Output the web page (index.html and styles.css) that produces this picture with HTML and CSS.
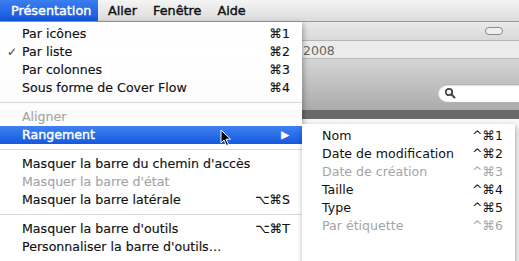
FILE: index.html
```html
<!DOCTYPE html>
<html>
	<head>
		<meta charset="utf-8">
		<title>Présentation</title>
		<link rel="stylesheet" href="styles.css">
	</head>
	<body>
		<div class="menubar">
			<span class="mb-item active">Présentation</span>
			<span class="mb-item">Aller</span>
			<span class="mb-item">Fenêtre</span>
			<span class="mb-item">Aide</span>
		</div>
		<div class="stage">
			<!-- fenetre du Finder derriere le menu -->
			<div class="window">
				<div class="win-title"><span class="pill"></span></div>
				<div class="win-path">2008</div>
				<div class="win-toolbar">
					<div class="search">
						<svg width="12" height="12" viewBox="0 0 12 12"><circle cx="5" cy="5" r="3.2" fill="none" stroke="#444" stroke-width="1.8"/><line x1="7.3" y1="7.3" x2="10.5" y2="10.5" stroke="#444" stroke-width="2" stroke-linecap="round"/></svg>
					</div>
				</div>
				<div class="win-band"></div>
				<div class="win-list"></div>
			</div>

			<ul class="menu main-menu">
				<li class="item"><span>Par icônes</span><span class="key">⌘1</span></li>
				<li class="item checked"><span>Par liste</span><span class="key">⌘2</span></li>
				<li class="item"><span>Par colonnes</span><span class="key">⌘3</span></li>
				<li class="item"><span>Sous forme de Cover Flow</span><span class="key">⌘4</span></li>
				<li class="sep"></li>
				<li class="item off"><span>Aligner</span></li>
				<li class="item hl"><span>Rangement</span><span class="arrow">▶</span><span class="cursor"><svg width="12" height="18" viewBox="0 0 12 18"><path d="M1 1 L1 14 L4 11 L6.5 16.5 L8.5 15.5 L6 10.2 L10.5 10.2 Z" fill="#000" stroke="#fff" stroke-width="1"/></svg></span></li>
				<li class="sep"></li>
				<li class="item"><span>Masquer la barre du chemin d'accès</span></li>
				<li class="item off"><span>Masquer la barre d'état</span></li>
				<li class="item"><span>Masquer la barre latérale</span><span class="key">⌥⌘S</span></li>
				<li class="sep"></li>
				<li class="item"><span>Masquer la barre d'outils</span><span class="key">⌥⌘T</span></li>
				<li class="item"><span>Personnaliser la barre d'outils…</span></li>
			</ul>

			<ul class="menu sub-menu">
				<li class="item"><span>Nom</span><span class="key">^⌘1</span></li>
				<li class="item"><span>Date de modification</span><span class="key">^⌘2</span></li>
				<li class="item off"><span>Date de création</span><span class="key">^⌘3</span></li>
				<li class="item"><span>Taille</span><span class="key">^⌘4</span></li>
				<li class="item"><span>Type</span><span class="key">^⌘5</span></li>
				<li class="item off"><span>Par étiquette</span><span class="key">^⌘6</span></li>
			</ul>
		</div>
	</body>
</html>
```

FILE: styles.css
```css
html,body{
	margin: 0;
	padding: 0;
}
body{
	width: 519px;
	height: 261px;
	overflow: hidden;
	background: #fff;
	font-family: "DejaVu Sans", "Liberation Sans", sans-serif;
	font-size: 12.6px;
	color: #111;
	-webkit-text-stroke: 0.15px;
}
.menubar{
	height: 22px;
	display: flex;
	background: linear-gradient(#f4f4f4, #dcdcdc);
	border-bottom: 1px solid #9a9a9a;
	box-sizing: border-box;
}
.mb-item{
	padding: 0 8px 0 8px;
	line-height: 21px;
	font-size: 12.8px;
	-webkit-text-stroke: 0.4px;
}
.mb-item.active{
	width: 98px;
	box-sizing: border-box;
	background: linear-gradient(#3a7ef0, #1456dc);
	color: #fff;
	padding: 0 0 0 11px;
	margin-right: 2px;
}
.stage{
	position: relative;
	height: 239px;
}
.window{
	height: 100%;
	display: flex;
	flex-direction: column;
}
.win-title{
	height: 18px;
	background: linear-gradient(#e9e9e9, #d9d9d9);
	border-bottom: 1px solid #b5b5b5;
	position: relative;
}
.pill{
	position: absolute;
	right: 16px;
	top: 5px;
	width: 16px;
	height: 6px;
	border: 1px solid #8a8a8a;
	border-radius: 4px;
	background: #eee;
}
.win-path{
	height: 17px;
	padding-left: 303px;
	line-height: 19px;
	font-size: 12.5px;
	color: #666;
	-webkit-text-stroke: 0;
	background: #ececec;
	border-bottom: 1px solid #bbb;
}
.win-toolbar{
	height: 51px;
	background: linear-gradient(#d5d5d5, #ababab);
	position: relative;
}
.search{
	position: absolute;
	left: 438px;
	top: 25px;
	width: 90px;
	height: 18px;
	border-radius: 9px;
	background: #fff;
	box-shadow: inset 0 1px 2px rgba(0,0,0,.4);
	display: flex;
	align-items: center;
	padding-left: 6px;
	box-sizing: border-box;
}
.win-band{
	height: 9px;
	background: #6a6a6a;
}
.win-list{
	flex: 1;
	background: #fafafa;
}
.menu{
	list-style: none;
	margin: 0;
	padding: 0;
	position: absolute;
	background: rgba(255,255,255,.97);
	box-shadow: 1px 2px 6px rgba(0,0,0,.35);
}
.main-menu{
	left: 0;
	top: 0;
	width: 302px;
	padding: 3px 0 5px;
}
.sub-menu{
	left: 302px;
	top: 102px;
	width: 213px;
	padding: 3px 0 30px;
	-webkit-text-stroke: 0;
}
.item{
	height: 18px;
	line-height: 18px;
	display: flex;
	justify-content: space-between;
	padding: 0 12px 0 22px;
	position: relative;
}
.sub-menu .item{
	padding: 0 12px 0 20px;
}
.key{
	font-size: 12.5px;
}
.off{
	color: #a5a5a5;
}
.checked:before{
	content: "\2713";
	position: absolute;
	left: 7px;
	font-size: 12px;
	color: #555;
}
.sep{
	height: 1px;
	background: #dadada;
	margin: 5px 0 5px;
}
.hl{
	background: linear-gradient(#3f82f2, #1559de);
	color: #fff;
	-webkit-text-stroke: 0.4px;
}
.arrow{
	font-size: 10px;
	margin-right: 1px;
}
.cursor{
	position: absolute;
	left: 220px;
	top: 3px;
	line-height: 0;
	-webkit-text-stroke: 0;
}
```
